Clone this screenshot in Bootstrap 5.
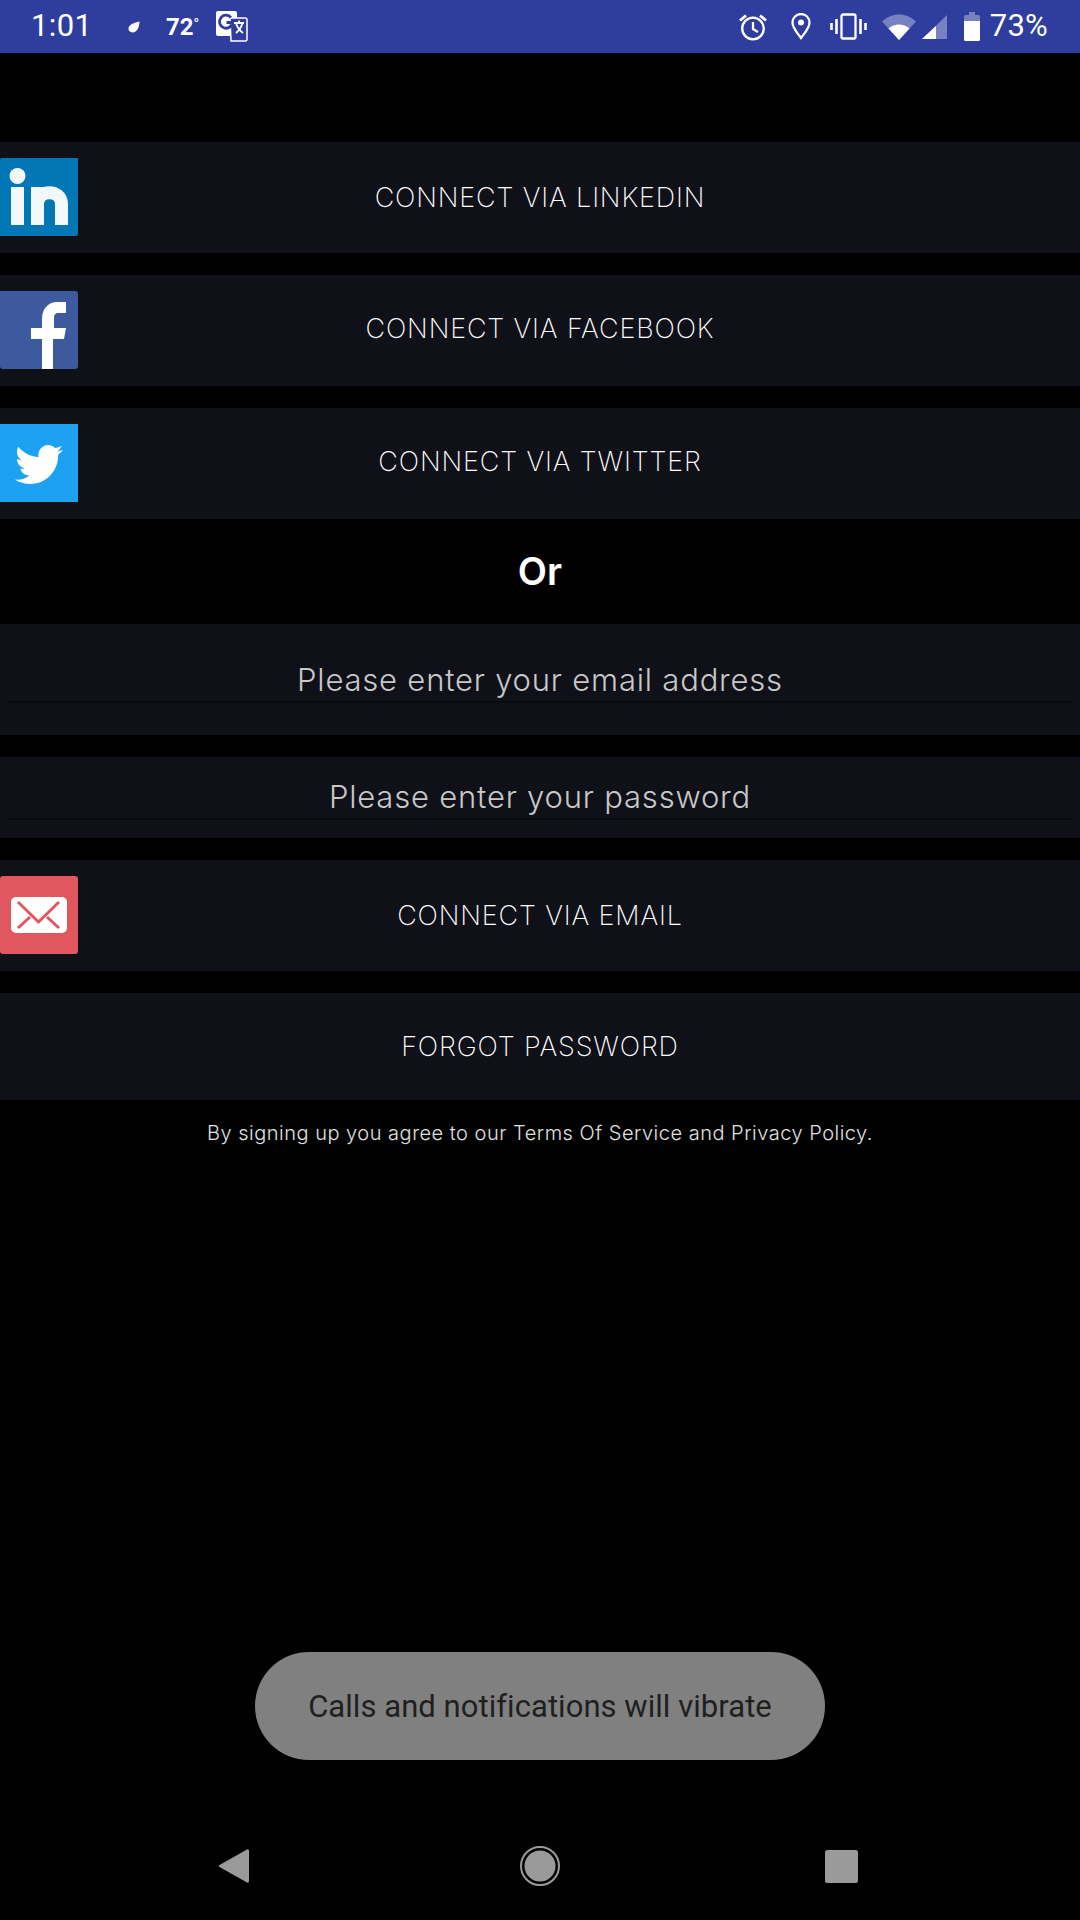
<!DOCTYPE html>
<html lang="en">
<head>
  <meta charset="UTF-8">
  <title>Connect</title>
  <link href="https://cdn.jsdelivr.net/npm/bootstrap@5.3.0/dist/css/bootstrap.min.css" rel="stylesheet">
  <style>
    body {
      margin: 0;
      width: 1080px;
      height: 1920px;
      background: #000;
      font-family: "Inter", "Liberation Sans", sans-serif;
      font-weight: 300;
      overflow: hidden;
    }

    .status-bar {
      height: 53px;
      background: #2f3e9e;
      color: #fff;
      font-family: "Roboto", sans-serif;
      padding-left: 31px;
    }

    .status-clock { font-size: 31px; width: 97px; font-weight: 400; letter-spacing: .4px; }
    .status-temp { font-size: 24px; font-weight: 700; margin-left: 26px; width: 50px; }
    .status-temp span { font-size: 15px; font-weight: 400; vertical-align: 6px; }
    .status-pct { font-size: 31px; font-weight: 400; margin-left: 10px; letter-spacing: .2px; }
    .status-right { margin-left: auto; padding-right: 32px; }

    .connect-list {
      padding-top: 89px;
    }

    .connect-row {
      display: grid;
      grid-template-columns: 78px 1fr 78px;
      align-items: center;
      background: #0f1018;
      color: #fff;
      height: 111px;
      margin-bottom: 22px;
      font-size: 27px;
      font-weight: 200;
      letter-spacing: .85px;
      text-align: center;
    }

    .connect-row svg { display: block; margin-top: -1px; }
    .connect-row span { margin-top: 1px; }
    .row-plain { height: 107px; margin-bottom: 0; }
    .logo-soft { filter: blur(.6px); }
    .or-label {
      height: 105px;
      margin-top: -22px;
      font-size: 38px;
      font-weight: 600;
      color: #fff;
      text-align: center;
      line-height: 105px;
    }

    .field-row {
      background: #0f1018;
      margin-bottom: 22px;
      padding: 0 8px;
    }
    .field-tall { height: 111px; padding-top: 35px; }
    .field-short { height: 81px; padding-top: 19px; }

    .field-row .form-control {
      height: 44px;
      background: transparent;
      border: 0;
      border-bottom: 2px solid #090a0f;
      border-radius: 0;
      padding: 0;
      text-align: center;
      font-size: 31px;
      font-weight: 300;
      letter-spacing: .8px;
      box-shadow: none;
    }
    .field-row .form-control::placeholder { color: #c8c8c8; opacity: 1; }

    .terms-text {
      color: #e0e0e0;
      font-size: 20px;
      letter-spacing: .5px;
      text-align: center;
      padding-top: 18px;
    }

    .toast-pill {
      position: absolute;
      left: 255px;
      top: 1652px;
      width: 570px;
      height: 108px;
      padding-top: 2px;
      border-radius: 54px;
      background: #808080;
      color: #1f1f1f;
      font-family: "Roboto", sans-serif;
      font-weight: 400;
      font-size: 31px;
      letter-spacing: .05px;
    }

    .nav-bar {
      position: absolute;
      left: 0;
      right: 0;
      bottom: 0;
      height: 108px;
      padding-left: 218px;
    }
    .nav-home { margin-left: 271px; }
    .nav-recent { margin-left: 265px; }
  </style>
</head>

<body>
  <div class="status-bar d-flex align-items-center">
    <span class="status-clock">1:01</span>
    <svg width="12" height="12" viewBox="0 0 12 12"><path d="M11.500 .5C11.500 6 9 11.500 4.500 11.500 1.800 11.500 .5 9.600 .5 7.600 .5 4 6 1.500 11.500 .5z" fill="#fff"/></svg>
    <span class="status-temp">72<span>°</span></span>
    <svg width="32" height="31" viewBox="0 0 32 31">
      <rect x="0" y="0" width="21" height="25" rx="2" fill="#fff"/>
      <path d="M14 7h15.500a1.500 1.500 0 0 1 1.500 1.500v20a1.500 1.500 0 0 1-1.500 1.500H15z" fill="#2f3e9e" stroke="#fff" stroke-width="1.500"/>
      <path d="M15 6.500a6.500 6.500 0 1 0 1.500 5H10.500" fill="none" stroke="#2f3e9e" stroke-width="2.800"/>
      <path d="M18 12h10M23 9.500v2.500M20 12c1 4 3 7 7 10M26.500 12c-1 4-3 7-6.500 10" fill="none" stroke="#fff" stroke-width="1.800"/>
    </svg>
    <div class="status-right d-flex align-items-center">
      <svg width="28" height="28" viewBox="0 0 28 28" fill="none" stroke="#fff" stroke-width="2.300">
        <circle cx="14" cy="15.500" r="10.800"/>
        <path d="M14 9v7l5 3"/>
        <path d="M1 7.500 7 2.500M27 7.500 21 2.500" stroke-width="2.800"/>
      </svg>
      <svg class="ms-4" width="20" height="27" viewBox="0 0 20 27" fill="none" stroke="#fff" stroke-width="2.300">
        <path d="M10 25C6 19.500 1.500 15 1.500 9.500a8.500 8.500 0 0 1 17 0C18.500 15 14 19.500 10 25z"/>
        <circle cx="10" cy="9.500" r="3" fill="#fff" stroke="none"/>
      </svg>
      <svg width="37" height="27" viewBox="0 0 37 27" fill="none" stroke="#fff" stroke-width="2.300" style="margin-left:19px">
        <rect x="11.500" y="1.500" width="14" height="24" rx="1.500"/>
        <path d="M6.500 6v15M30.500 6v15M1.500 10v7M35.500 10v7" stroke-width="2.600"/>
      </svg>
      <svg width="34" height="26" viewBox="0 0 34 26" style="margin-left:15px">
        <path d="M0 7.500C10-2 24-2 34 7.500L17 26z" fill="#7982c0"/>
        <path d="M6.500 14.500C12.500 9 21.500 9 27.500 14.500L17 26z" fill="#fff"/>
      </svg>
      <svg width="25" height="24" viewBox="0 0 25 24" style="margin-left:6px">
        <path d="M25 0V24H0z" fill="#7982c0"/>
        <path d="M14 11V24H0z" fill="#fff"/>
      </svg>
      <svg width="16" height="29" viewBox="0 0 16 29" style="margin-left:17px">
        <path d="M5 0h6v3h3.500A1.500 1.500 0 0 1 16 4.500V9H0V4.500A1.500 1.500 0 0 1 1.500 3H5z" fill="#7982c0"/>
        <path d="M0 9h16v18.500a1.500 1.500 0 0 1-1.500 1.500h-13A1.500 1.500 0 0 1 0 27.500z" fill="#fff"/>
      </svg>
      <span class="status-pct">73%</span>
    </div>
  </div>

  <div class="connect-list">
    <div class="connect-row">
      <svg width="78" height="78" viewBox="0 0 78 78">
        <path d="M0 2a2 2 0 0 1 2-2h76v76a2 2 0 0 1-2 2H0z" fill="#0177b5"/>
        <g class="logo-soft">
          <circle cx="17.500" cy="18" r="8" fill="#f2f7fa"/>
          <rect x="11" y="29" width="13" height="38" fill="#f2f7fa"/>
          <path d="M37.500 67V29M37.500 46c0-15 24-15 24 0v21" fill="none" stroke="#f2f7fa" stroke-width="13"/>
        </g>
      </svg>
      <span>CONNECT VIA LINKEDIN</span>
    </div>
    <div class="connect-row">
      <svg width="78" height="78" viewBox="0 0 78 78">
        <path d="M0 0h75a3 3 0 0 1 3 3v72a3 3 0 0 1-3 3H3a3 3 0 0 1-3-3z" fill="#3d5a9f"/>
        <path d="M42 78V48H31V37h11V28c0-11 7-17 15-17h9v11h-7c-4 0-5 2-5 5v10h12l-2 11H53v30z" fill="#fff"/>
      </svg>
      <span class="pb-1">CONNECT VIA FACEBOOK</span>
    </div>
    <div class="connect-row">
      <svg width="78" height="78" viewBox="0 0 78 78">
        <rect width="78" height="78" fill="#1da1f2"/>
        <g transform="translate(15 16.500) scale(2)">
          <path d="M23.953 4.570a10 10 0 0 1-2.825.775 4.958 4.958 0 0 0 2.163-2.723c-.951.555-2.005.959-3.127 1.184a4.920 4.920 0 0 0-8.384 4.482C7.690 8.095 4.067 6.130 1.640 3.162a4.822 4.822 0 0 0-.666 2.475c0 1.710.870 3.213 2.188 4.096a4.904 4.904 0 0 1-2.228-.616v.060a4.923 4.923 0 0 0 3.946 4.827 4.996 4.996 0 0 1-2.212.085 4.936 4.936 0 0 0 4.604 3.417 9.867 9.867 0 0 1-6.102 2.105c-.390 0-.779-.023-1.170-.067a13.995 13.995 0 0 0 7.557 2.209c9.053 0 13.998-7.496 13.998-13.985 0-.210 0-.420-.015-.630A9.935 9.935 0 0 0 24 4.590z" fill="#fff"/>
        </g>
      </svg>
      <span class="pb-1">CONNECT VIA TWITTER</span>
    </div>
    <div class="or-label">Or</div>
    <div class="field-row field-tall">
      <input type="text" class="form-control" placeholder="Please enter your email address">
    </div>
    <div class="field-row field-short">
      <input type="password" class="form-control" placeholder="Please enter your password">
    </div>
    <div class="connect-row">
      <svg width="78" height="78" viewBox="0 0 78 78">
        <path d="M0 3a3 3 0 0 1 3-3h72a3 3 0 0 1 3 3v72a3 3 0 0 1-3 3H3a3 3 0 0 1-3-3z" fill="#e0585e"/>
        <rect x="11" y="21" width="56" height="36" rx="5" fill="#fff"/>
        <path d="M18 26 38.500 46 59 26M18 52 30 41M59 52 47 41" fill="none" stroke="#e0585e" stroke-width="3"/>
      </svg>
      <span>CONNECT VIA EMAIL</span>
    </div>
    <div class="connect-row row-plain">
      <span></span>
      <span>FORGOT PASSWORD</span>
    </div>
    <div class="terms-text">By signing up you agree to our Terms Of Service and Privacy Policy.</div>
  </div>

  <div class="toast-pill d-flex align-items-center justify-content-center">Calls and notifications will vibrate</div>

  <div class="nav-bar d-flex align-items-center">
    <svg width="31" height="36" viewBox="0 0 31 36"><path d="M29 1.500 1.500 17a1.200 1.200 0 0 0 0 2L29 34.500a1.300 1.300 0 0 0 2-1V2.500a1.300 1.300 0 0 0-2-1z" fill="#9a9a9a"/></svg>
    <svg class="nav-home" width="40" height="40" viewBox="0 0 40 40"><circle cx="20" cy="20" r="19" fill="none" stroke="#9a9a9a" stroke-width="2"/><circle cx="20" cy="20" r="15.500" fill="#9a9a9a"/></svg>
    <svg class="nav-recent" width="33" height="33" viewBox="0 0 33 33"><rect width="33" height="33" rx="2.500" fill="#9a9a9a"/></svg>
  </div>

  <script src="https://cdn.jsdelivr.net/npm/bootstrap@5.3.0/dist/js/bootstrap.bundle.min.js"></script>
</body>
</html>
